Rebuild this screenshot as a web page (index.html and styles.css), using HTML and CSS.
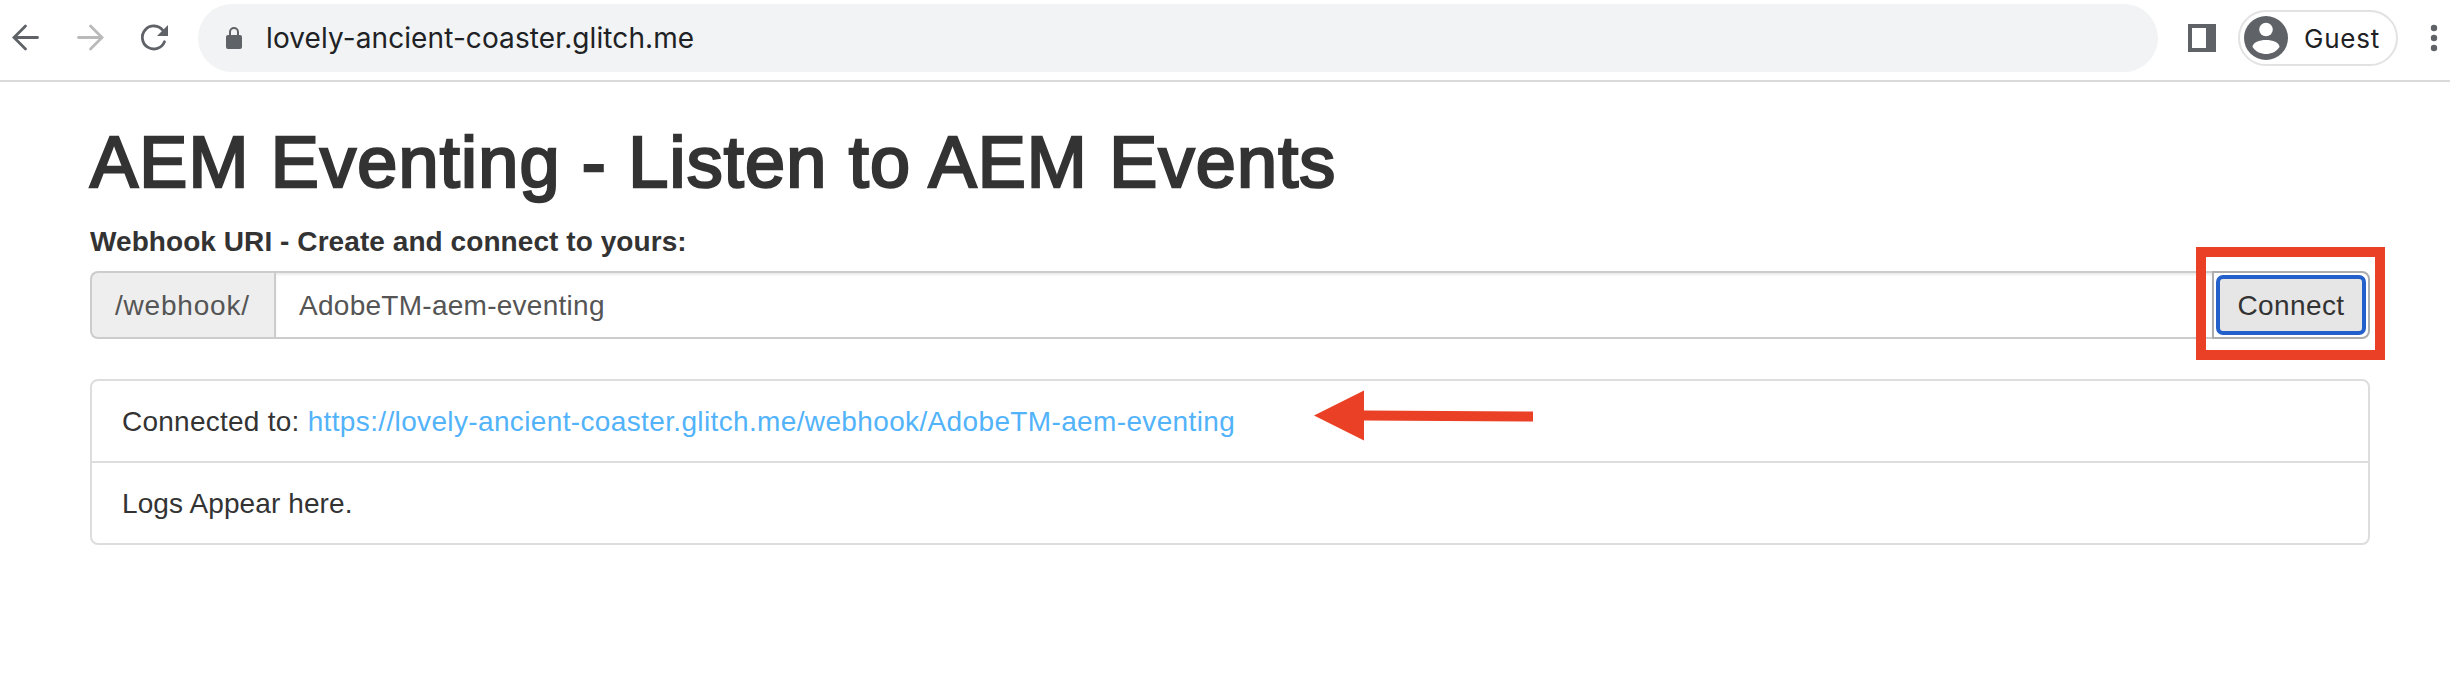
FILE: index.html
```html
<!DOCTYPE html>
<html lang="en">
<head>
<meta charset="utf-8">
<title>AEM Eventing</title>
<link rel="stylesheet" href="styles.css">
</head>
<body>
<header class="toolbar">
  <svg class="nav" viewBox="0 0 190 80" width="190" height="80" fill="none" stroke-width="2.800" stroke-linecap="round">
    <path d="M37.500 37.500H14.500M25.500 26L14 37.500L25.500 49" stroke="#5f6368"/>
    <path d="M78.500 37.500H101.500M90.500 26L102 37.500L90.500 49" stroke="#bababa"/>
    <path d="M163 30.500A11.500 11.500 0 1 0 164.500 41.800" stroke="#5f6368"/>
    <path d="M168 25V36H157Z" fill="#5f6368"/>
  </svg>
  <div class="omnibox">
    <svg width="18" height="24" viewBox="0 0 18 24"><path d="M5 9V6A4 4 0 0 1 13 6V9" fill="none" stroke="#5f6368" stroke-width="2"/><rect x="1" y="9" width="16" height="14" rx="2" fill="#5f6368"/></svg>
    <span class="address">lovely-ancient-coaster.glitch.me</span>
  </div>
  <svg class="panel" width="28" height="28"><path fill="#5f6368" fill-rule="evenodd" d="M0 0H28V28H0ZM4 4V24H18V4Z"/></svg>
  <div class="profile">
    <svg width="44" height="44" viewBox="0 0 44 44"><circle cx="22" cy="22" r="22" fill="#5f6368"/><circle cx="22" cy="13.500" r="6.800" fill="#fff"/><path d="M8.500 31C8.500 26.500 15.500 24 22 24S35.500 26.500 35.500 31C32 36 27 38 22 38S12 36 8.500 31Z" fill="#fff"/></svg>
    <span class="guest">Guest</span>
  </div>
  <svg class="more" width="8" height="28" fill="#5f6368"><circle cx="4" cy="4" r="3.200"/><circle cx="4" cy="14" r="3.200"/><circle cx="4" cy="24" r="3.200"/></svg>
</header>
<main class="page">
  <h1 class="title"><span class="title-text">AEM Eventing - Listen to AEM Events</span></h1>
  <label class="label"><span class="label-text">Webhook URI - Create and connect to yours:</span></label>
  <div class="group">
    <span class="addon">/webhook/</span>
    <div class="field"><span class="field-text">AdobeTM-aem-eventing</span></div>
    <button class="connect"><span class="connect-text">Connect</span></button>
    <div class="highlight"></div>
  </div>
  <ul class="logs">
    <li class="log"><span class="log-text">Connected to: <a class="link">https://lovely-ancient-coaster.glitch.me/webhook/AdobeTM-aem-eventing</a></span>
      <svg class="arrow" width="220" height="52" viewBox="0 0 220 52" fill="#ea4025"><path d="M0 25.500L50 0.500V50.500ZM50 20.500L219 21.500V31.500L50 30.500Z"/></svg>
    </li>
    <li class="log"><span class="log-end">Logs Appear here.</span></li>
  </ul>
</main>
</body>
</html>
```
FILE: styles.css
```css
* { box-sizing: border-box; }
body { margin: 0; background: #fff; color: #333; font: 28px/40px "Liberation Sans", Arial, sans-serif; }
.toolbar { height: 82px; display: flex; align-items: flex-start; border-bottom: 2px solid #dadada; }
.nav { flex: none; }
.omnibox { width: 1960px; height: 68px; margin: 4px 0 0 8px; border-radius: 34px; background: #f1f3f4; display: flex; align-items: center; padding-left: 27px; }
.address { margin-left: 23px; font: 28px/40px Inter, sans-serif; letter-spacing: .1px; color: #202124; white-space: nowrap; }
.panel { margin: 24px 0 0 30px; }
.profile { width: 160px; height: 56px; margin: 10px 0 0 22px; border: 2px solid #e2e2e2; border-radius: 28px; display: flex; align-items: center; padding-left: 4px; }
.guest { margin-left: 16px; font: 26px/40px Inter, sans-serif; letter-spacing: .8px; color: #202124; padding-top: 2px; }
.more { margin: 24px 0 0 32px; }
.page { padding: 40px 80px 0 90px; }
.title { margin: 0; height: 80px; font-size: 72px; line-height: 80px; font-weight: 400; letter-spacing: 1.200px; -webkit-text-stroke: 2.500px #333; white-space: nowrap; }
.label { display: block; height: 40px; margin-top: 20px; font-weight: 700; letter-spacing: .07px; }
.group { position: relative; display: flex; height: 68px; margin-top: 9px; }
.addon { width: 184px; border: 2px solid #ccc; border-right: 0; border-radius: 8px 0 0 8px; background: #eee; color: #555; padding: 13px 0 0 23px; letter-spacing: .8px; }
.field { flex: 1; border: 2px solid #ccc; border-right: 0; color: #555; padding: 13px 24px 0 23px; letter-spacing: .27px; box-shadow: inset 0 2px 2px rgba(0,0,0,.075); }
.field { border-left: 2px solid #ccc; }
.connect { position: relative; width: 158px; border: 2px solid #adadad; border-radius: 0 8px 8px 0; background: #fff; color: #333; padding: 2px 0 0; font: inherit; letter-spacing: .4px; }
.connect::before { content: ""; position: absolute; inset: 2px; border: 4px solid #2360cc; border-radius: 7px; background: #e6e6e6; }
.connect-text { position: relative; }
.highlight { position: absolute; right: -15px; top: -24px; width: 189px; height: 113px; border: 10px solid #ea4025; }
.logs { list-style: none; margin: 40px 0 0; padding: 0; border: 2px solid #ddd; border-radius: 8px; }
.log { height: 80px; padding: 21px 30px 0; display: flex; white-space: nowrap; letter-spacing: .1px; }
.log + .log { height: 82px; border-top: 2px solid #ddd; }
.log-text { width: 1112px; letter-spacing: .25px; }
.link { color: #52b3fa; letter-spacing: .36px; }
.arrow { margin: -12px 0 0 80px; }
```
